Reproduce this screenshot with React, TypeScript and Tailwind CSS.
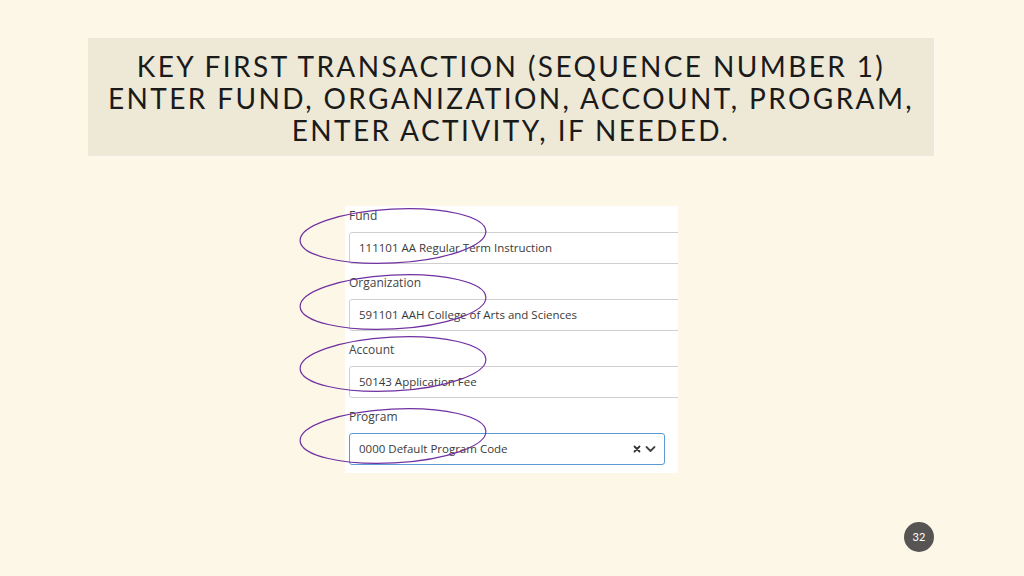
import React from "react";

const fields = [
  { label: "Fund", value: "111101 AA Regular Term Instruction" },
  { label: "Organization", value: "591101 AAH College of Arts and Sciences" },
  { label: "Account", value: "50143 Application Fee" },
];

// centres of the hand-drawn ellipses, page coordinates
const marks = [
  { cx: 393, cy: 236 },
  { cx: 393, cy: 302 },
  { cx: 393, cy: 364 },
  { cx: 393, cy: 436 },
];

export default function App() {
  return (
    <div
      className="relative w-[1024px] h-[576px] overflow-hidden bg-[#fdf7e7]"
      style={{ fontFamily: "Lato, 'Liberation Sans', sans-serif" }}
    >
      <div className="pt-[37px] pl-[87px]">
        <div className="w-[848px] h-[120px] border border-[#fbf8ef] bg-[#eee8d6] flex flex-col items-center justify-center">
          <h1
            className="text-center uppercase text-[#1a1a1a] text-[28px] leading-[32px] tracking-[2.4px] pt-[1px]"
            style={{ fontFamily: "Lato, 'Open Sans', sans-serif", fontWeight: 400 }}
          >
            Key first transaction (sequence number 1)
            <br />
            Enter fund, organization, account, program,
            <br />
            Enter activity, if needed.
          </h1>
        </div>
      </div>

      <div className="mt-[49px] ml-[345px] w-[333px] h-[267px] bg-white overflow-hidden pl-[4px]"
        style={{ fontFamily: "'Open Sans', sans-serif" }}
      >
        {fields.map((f, i) => (
          <div key={f.label} className={i === 0 ? "" : "mt-[9px]"}>
            <div className="h-5 leading-5 text-[12px] text-[#444]">{f.label}</div>
            <div className="mt-[6px] w-[360px] h-8 border border-[#cfcfcf] rounded-[3px] flex items-center pl-[9px] text-[11.5px] text-[#3a3a3a]">
              {f.value}
            </div>
          </div>
        ))}
        <div className="mt-[9px]">
          <div className="h-5 leading-5 text-[12px] text-[#444]">Program</div>
          <div className="mt-[6px] w-[316px] h-8 border border-[#5b9bd5] rounded-[3px] flex items-center justify-between pl-[9px] pr-[8px] text-[11.5px] text-[#3a3a3a]">
            <span>0000 Default Program Code</span>
            <span className="flex items-center gap-[4px] text-[#333]">
              <svg width="8" height="8" viewBox="0 0 8 8">
                <path d="M1.5 1.5 L6.5 6.5 M6.5 1.5 L1.5 6.5" stroke="#333" strokeWidth="1.8" strokeLinecap="round" />
              </svg>
              <svg width="11" height="8" viewBox="0 0 11 8">
                <path d="M1.5 2 L5.5 6 L9.5 2" fill="none" stroke="#444" strokeWidth="1.8" strokeLinecap="round" strokeLinejoin="round" />
              </svg>
            </span>
          </div>
        </div>
      </div>

      <svg className="absolute left-0 top-0 pointer-events-none" width="1024" height="576">
        {marks.map((m, i) => (
          <ellipse
            key={i}
            cx={m.cx}
            cy={m.cy}
            rx="93"
            ry="27"
            fill="none"
            stroke="#7030a0"
            strokeWidth="1.2"
            transform={`rotate(-3 ${m.cx} ${m.cy})`}
          />
        ))}
      </svg>

      <div className="absolute left-[904px] top-[522px] w-[30px] h-[30px] rounded-full bg-[#575553] flex items-center justify-center text-white text-[11px]"
        style={{ fontFamily: "Lato, sans-serif" }}
      >
        32
      </div>
    </div>
  );
}
